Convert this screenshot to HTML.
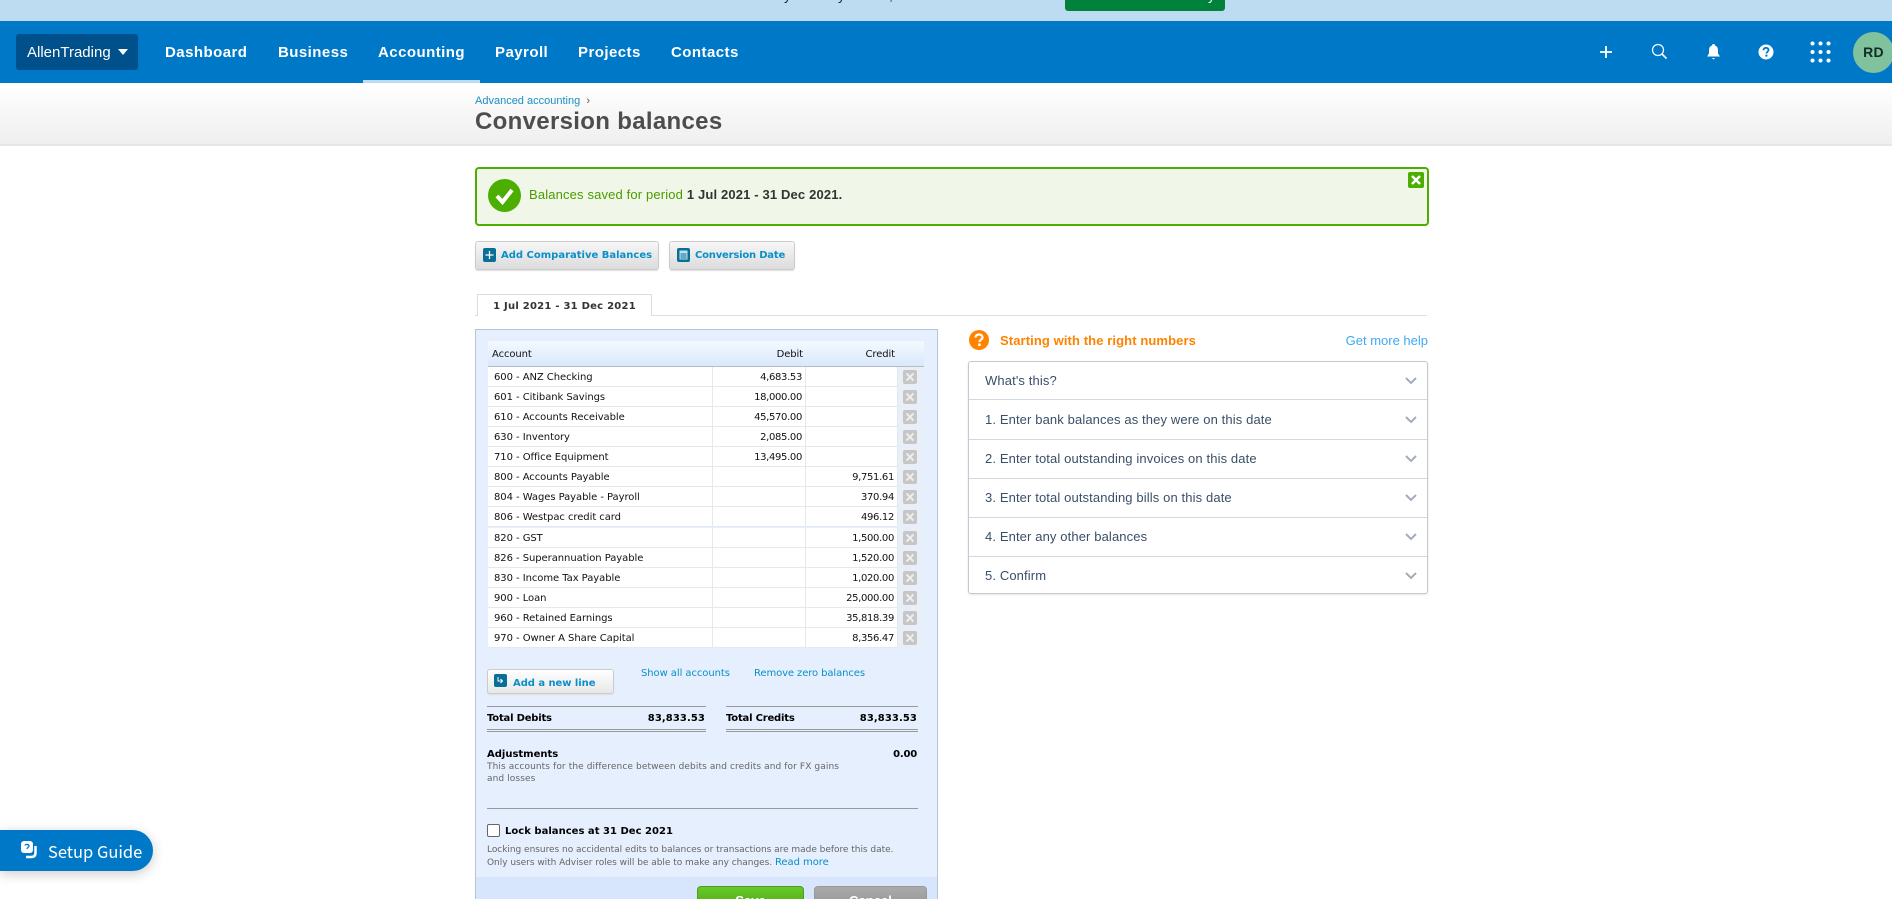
<!DOCTYPE html>
<html lang="en"><head><meta charset="utf-8"><title>Conversion balances</title>
<style>
*{box-sizing:border-box}
html,body{margin:0;padding:0;width:1892px;height:899px;overflow:hidden;background:#fff}
body{position:relative;font-family:"Liberation Sans",sans-serif}
.a{position:absolute;white-space:nowrap}
.v{font-family:"DejaVu Sans",sans-serif}
.nav{position:absolute;top:21px;left:0;width:1892px;height:62px;background:#0078c8}
.ni{position:absolute;top:43px;line-height:20px;font-size:15px;font-weight:bold;color:#fff;letter-spacing:.45px;white-space:nowrap}
.btn{position:absolute;border:1px solid #ccc;border-radius:3px;background:linear-gradient(#f7f7f7,#dcdcdc);box-shadow:0 1px 1px #ddd}
.lnk{color:#0a8fc9}
.row{position:absolute;left:488px;width:436px;height:20px;background:#fff;border-bottom:1px solid #e6e8ec;font:10px/20px "DejaVu Sans",sans-serif;color:#111;letter-spacing:-.06px}
.row i{position:absolute;top:0;height:20px;width:1px;background:#e6e8ec}
.row b{font-weight:normal;position:absolute;top:1px;white-space:nowrap}
.row b.n{letter-spacing:-.33px}
.row .x{position:absolute;left:415px;top:3px;width:14px;height:14px;background:#c6c6c6;border-radius:2px}
.row .x::before,.row .x::after{content:"";position:absolute;left:2px;top:6px;width:10px;height:2px;background:#eee;transform:rotate(45deg)}
.row .x::after{transform:rotate(-45deg)}
.row .cl{position:absolute;left:410px;top:0;width:26px;height:20px;background:#e8eff9}
.acc{position:absolute;left:969px;width:458px;height:39px;border-bottom:1px solid #d3d8e0;font-size:13px;line-height:38px;color:#3a4f68;padding-left:16px;letter-spacing:.12px;white-space:nowrap}
.acc svg{position:absolute;left:436px;top:15px}
</style></head><body>
<div class="a" style="left:0;top:0;width:1892px;height:21px;background:#bddcf1"></div>
<div class="a" style="left:784px;top:-13px;font-size:14px;line-height:16px;color:#222">y</div>
<div class="a" style="left:838px;top:-13px;font-size:14px;line-height:16px;color:#222">y</div>
<div class="a" style="left:889px;top:-13px;font-size:14px;line-height:16px;color:#222">,</div>
<div class="a" style="left:1065px;top:0;width:160px;height:11px;background:#00823d;border-radius:0 0 3px 3px"></div>
<div class="a" style="left:1208px;top:-13px;font-size:14px;line-height:16px;color:#fff">y</div>
<div class="nav"></div>
<div class="a" style="left:16px;top:34px;width:122px;height:36px;background:#00508c;border-radius:3px"></div>
<div class="a" style="left:27px;top:43px;font-size:15px;line-height:20px;color:#fff">AllenTrading</div>
<svg class="a" style="left:118px;top:49px" width="10" height="6"><path d="M0 0H10L5 6Z" fill="#fff"/></svg>
<div class="ni" style="left:165px">Dashboard</div>
<div class="ni" style="left:278px">Business</div>
<div class="ni" style="left:378px">Accounting</div>
<div class="ni" style="left:495px">Payroll</div>
<div class="ni" style="left:578px">Projects</div>
<div class="ni" style="left:671px">Contacts</div>
<div class="a" style="left:363px;top:80px;width:117px;height:3px;background:#bddcf1"></div>
<svg class="a" style="left:1598px;top:44px" width="16" height="16"><path d="M8 2V14M2 8H14" stroke="#fff" stroke-width="1.8" fill="none"/></svg>
<svg class="a" style="left:1651px;top:43px" width="17" height="17"><circle cx="7" cy="7" r="5.5" stroke="#fff" stroke-width="1.2" fill="none"/><path d="M11 11L15.5 15.5" stroke="#fff" stroke-width="1.6"/></svg>
<svg class="a" style="left:1706px;top:43px" width="15" height="18"><path d="M7.5 1C8.5 1 9 1.7 9 2.5C11.5 3.3 12 5.5 12 8V10.5L14 13.5H1L3 10.5V8C3 5.5 3.5 3.3 6 2.5C6 1.700 6.500 1 7.500 1ZM6 15H9L7.500 16.500Z" fill="#fff"/></svg>
<svg class="a" style="left:1758px;top:44px" width="16" height="16"><circle cx="8" cy="8" r="7.500" fill="#fff"/><path d="M5.500 6.200C5.500 4.600 6.700 3.800 8 3.800C9.500 3.800 10.500 4.700 10.500 6C10.500 7.700 8.500 7.800 8.500 9.500" stroke="#0078c8" stroke-width="1.800" fill="none"/><rect x="7.400" y="10.600" width="2" height="2" fill="#0078c8"/></svg>
<svg class="a" style="left:1810px;top:41px" width="22" height="22" fill="#fff"><circle cx="2.500" cy="2.500" r="2"/><circle cx="10.500" cy="2.500" r="2"/><circle cx="18.500" cy="2.500" r="2"/><circle cx="2.500" cy="11" r="2"/><circle cx="10.500" cy="11" r="2"/><circle cx="18.500" cy="11" r="2"/><circle cx="2.500" cy="19.500" r="2"/><circle cx="10.500" cy="19.500" r="2"/><circle cx="18.500" cy="19.500" r="2"/></svg>
<div class="a" style="left:1853px;top:32px;width:41px;height:41px;border-radius:50%;background:#80c19e;color:#0f2f20;font-size:14px;font-weight:bold;text-align:center;line-height:41px;letter-spacing:.3px">RD</div>

<div class="a" style="left:0;top:83px;width:1892px;height:63px;background:linear-gradient(#fff,#efefef);border-bottom:2px solid #e6e6e6"></div>
<div class="a" style="left:475px;top:94px;font-size:11px;line-height:14px;color:#1a8fc4">Advanced accounting &nbsp;<span style="color:#555">›</span></div>
<div class="a" style="left:475px;top:108px;font-size:24px;line-height:28px;font-weight:bold;color:#4d4d4d;letter-spacing:.32px">Conversion balances</div>

<div class="a" style="left:475px;top:167px;width:954px;height:59px;background:#f0f7e8;border:2px solid #4cae00;border-radius:4px"></div>
<svg class="a" style="left:488px;top:179px" width="33" height="33"><circle cx="16.500" cy="16.500" r="16.500" fill="#4cae00"/><path d="M9 17L14.500 23L24 11" stroke="#fff" stroke-width="4" fill="none"/></svg>
<div class="a" style="left:529px;top:187px;font-size:13px;line-height:16px;color:#4c9a00;letter-spacing:.15px">Balances saved for period <b style="color:#333">1 Jul 2021 - 31 Dec 2021.</b></div>
<svg class="a" style="left:1408px;top:172px" width="16" height="16"><rect width="16" height="16" rx="2" fill="#4cae00"/><path d="M4 4L12 12M12 4L4 12" stroke="#fff" stroke-width="2.500"/></svg>

<div class="btn" style="left:475px;top:241px;width:184px;height:29px"></div>
<svg class="a" style="left:483px;top:248px" width="13" height="14"><rect width="13" height="14" rx="2" fill="#0a6f96"/><path d="M6.500 3V11M2.500 7H10.500" stroke="#fff" stroke-width="1.300"/></svg>
<div class="a v lnk" style="left:501px;top:249px;font-size:10px;line-height:14px;font-weight:bold;letter-spacing:0">Add Comparative Balances</div>
<div class="btn" style="left:669px;top:241px;width:126px;height:29px"></div>
<svg class="a" style="left:677px;top:248px" width="13" height="14"><rect width="13" height="14" rx="2" fill="#0a6f96"/><rect x="2.500" y="2.500" width="8" height="9" fill="#bfe0ee"/><path d="M3.500 6H9.500M3.500 8H9.500M3.500 10H9.500" stroke="#0a6f96"/></svg>
<div class="a v lnk" style="left:695px;top:249px;font-size:10px;line-height:14px;font-weight:bold;letter-spacing:-.2px">Conversion Date</div>

<div class="a" style="left:475px;top:315px;width:952px;height:1px;background:#ddd"></div>
<div class="a v" style="left:477px;top:294px;width:175px;height:22px;background:#fff;border:1px solid #ddd;border-bottom:0;text-align:center;font-size:10px;line-height:23px;font-weight:bold;color:#333;letter-spacing:.25px">1 Jul 2021 - 31 Dec 2021</div>

<div class="a" style="left:475px;top:329px;width:463px;height:571px;background:#e5effd;border:1px solid #b8c4d4"></div>
<div class="a" style="left:476px;top:877px;width:461px;height:22px;background:#d7e6fc"></div>
<div class="a v" style="left:488px;top:341px;width:436px;height:26px;background:linear-gradient(#f4f9ff,#d9e8fb);border-bottom:1px solid #b5bcc5;font-size:10px;line-height:27px;color:#111;letter-spacing:-.1px">
<span class="a" style="left:4px">Account</span><span class="a" style="right:121px">Debit</span><span class="a" style="right:29px">Credit</span></div>

<div class="row" style="top:367px"><b style="left:6px">600 - ANZ Checking</b><i style="left:224px"></i><i style="left:317px"></i><i style="left:409px"></i><b class="n" style="right:122px">4,683.53</b><span class="cl"></span><span class="x"></span></div>
<div class="row" style="top:387px"><b style="left:6px">601 - Citibank Savings</b><i style="left:224px"></i><i style="left:317px"></i><i style="left:409px"></i><b class="n" style="right:122px">18,000.00</b><span class="cl"></span><span class="x"></span></div>
<div class="row" style="top:407px"><b style="left:6px">610 - Accounts Receivable</b><i style="left:224px"></i><i style="left:317px"></i><i style="left:409px"></i><b class="n" style="right:122px">45,570.00</b><span class="cl"></span><span class="x"></span></div>
<div class="row" style="top:427px"><b style="left:6px">630 - Inventory</b><i style="left:224px"></i><i style="left:317px"></i><i style="left:409px"></i><b class="n" style="right:122px">2,085.00</b><span class="cl"></span><span class="x"></span></div>
<div class="row" style="top:447px"><b style="left:6px">710 - Office Equipment</b><i style="left:224px"></i><i style="left:317px"></i><i style="left:409px"></i><b class="n" style="right:122px">13,495.00</b><span class="cl"></span><span class="x"></span></div>
<div class="row" style="top:467px"><b style="left:6px">800 - Accounts Payable</b><i style="left:224px"></i><i style="left:317px"></i><i style="left:409px"></i><b class="n" style="right:30px">9,751.61</b><span class="cl"></span><span class="x"></span></div>
<div class="row" style="top:487px"><b style="left:6px">804 - Wages Payable - Payroll</b><i style="left:224px"></i><i style="left:317px"></i><i style="left:409px"></i><b class="n" style="right:30px">370.94</b><span class="cl"></span><span class="x"></span></div>
<div class="row" style="top:507px"><b style="left:6px">806 - Westpac credit card</b><i style="left:224px"></i><i style="left:317px"></i><i style="left:409px"></i><b class="n" style="right:30px">496.12</b><span class="cl"></span><span class="x"></span></div>
<div class="row" style="top:528px"><b style="left:6px">820 - GST</b><i style="left:224px"></i><i style="left:317px"></i><i style="left:409px"></i><b class="n" style="right:30px">1,500.00</b><span class="cl"></span><span class="x"></span></div>
<div class="row" style="top:548px"><b style="left:6px">826 - Superannuation Payable</b><i style="left:224px"></i><i style="left:317px"></i><i style="left:409px"></i><b class="n" style="right:30px">1,520.00</b><span class="cl"></span><span class="x"></span></div>
<div class="row" style="top:568px"><b style="left:6px">830 - Income Tax Payable</b><i style="left:224px"></i><i style="left:317px"></i><i style="left:409px"></i><b class="n" style="right:30px">1,020.00</b><span class="cl"></span><span class="x"></span></div>
<div class="row" style="top:588px"><b style="left:6px">900 - Loan</b><i style="left:224px"></i><i style="left:317px"></i><i style="left:409px"></i><b class="n" style="right:30px">25,000.00</b><span class="cl"></span><span class="x"></span></div>
<div class="row" style="top:608px"><b style="left:6px">960 - Retained Earnings</b><i style="left:224px"></i><i style="left:317px"></i><i style="left:409px"></i><b class="n" style="right:30px">35,818.39</b><span class="cl"></span><span class="x"></span></div>
<div class="row" style="top:628px"><b style="left:6px">970 - Owner A Share Capital</b><i style="left:224px"></i><i style="left:317px"></i><i style="left:409px"></i><b class="n" style="right:30px">8,356.47</b><span class="cl"></span><span class="x"></span></div>

<div class="btn" style="left:487px;top:669px;width:127px;height:25px;background:linear-gradient(#fff,#e8e8e8)"></div>
<svg class="a" style="left:494px;top:674px" width="13" height="13"><rect width="13" height="13" rx="2" fill="#0a6f96"/><path d="M4 3V7H8M6.500 5L8.500 7L6.500 9" stroke="#fff" fill="none"/></svg>
<div class="a v lnk" style="left:513px;top:677px;font-size:10px;line-height:14px;font-weight:bold;letter-spacing:-.05px">Add a new line</div>
<div class="a v lnk" style="left:641px;top:667px;font-size:10px;line-height:14px;letter-spacing:-.07px">Show all accounts</div>
<div class="a v lnk" style="left:754px;top:667px;font-size:10px;line-height:14px;letter-spacing:-.1px">Remove zero balances</div>

<div class="a" style="left:487px;top:706px;width:219px;height:1px;background:#999"></div>
<div class="a" style="left:726px;top:706px;width:192px;height:1px;background:#999"></div>
<div class="a" style="left:487px;top:729px;width:219px;height:3px;border-top:1px solid #999;border-bottom:1px solid #999"></div>
<div class="a" style="left:726px;top:729px;width:192px;height:3px;border-top:1px solid #999;border-bottom:1px solid #999"></div>
<div class="a v" style="left:487px;top:712px;font-size:10px;line-height:14px;font-weight:bold;color:#000;letter-spacing:-.2px">Total Debits</div>
<div class="a v" style="right:1187px;top:712px;font-size:10px;line-height:14px;font-weight:bold;color:#000;letter-spacing:.1px">83,833.53</div>
<div class="a v" style="left:726px;top:712px;font-size:10px;line-height:14px;font-weight:bold;color:#000;letter-spacing:-.2px">Total Credits</div>
<div class="a v" style="right:975px;top:712px;font-size:10px;line-height:14px;font-weight:bold;color:#000;letter-spacing:.1px">83,833.53</div>
<div class="a v" style="left:487px;top:748px;font-size:10px;line-height:14px;font-weight:bold;color:#000;letter-spacing:0">Adjustments</div>
<div class="a v" style="right:975px;top:748px;font-size:10px;line-height:14px;font-weight:bold;color:#000;letter-spacing:-.2px">0.00</div>
<div class="a v" style="left:487px;top:760px;font-size:9px;line-height:14px;color:#666;letter-spacing:.1px">This accounts for the difference between debits and credits and for FX gains</div>
<div class="a v" style="left:487px;top:772px;font-size:9px;line-height:14px;color:#666;letter-spacing:.1px">and losses</div>
<div class="a" style="left:487px;top:808px;width:431px;height:1px;background:#999"></div>
<div class="a" style="left:487px;top:824px;width:13px;height:13px;background:#fff;border:1px solid #666;border-radius:2px"></div>
<div class="a v" style="left:505px;top:825px;font-size:10px;line-height:14px;font-weight:bold;color:#000;letter-spacing:.02px">Lock balances at 31 Dec 2021</div>
<div class="a v" style="left:487px;top:843px;font-size:9px;line-height:14px;color:#666;letter-spacing:-.03px">Locking ensures no accidental edits to balances or transactions are made before this date.</div>
<div class="a v" style="left:487px;top:856px;font-size:9px;line-height:14px;color:#666;letter-spacing:-.03px">Only users with Adviser roles will be able to make any changes. <span class="lnk" style="font-size:10px;letter-spacing:-.05px">Read more</span></div>
<div class="a" style="left:697px;top:886px;width:107px;height:20px;background:linear-gradient(#68c82c,#52ae14);border:1px solid #4c9e16;border-radius:4px;text-align:center;font-size:13px;font-weight:bold;line-height:28px;color:#fff">Save</div>
<div class="a" style="left:814px;top:886px;width:113px;height:20px;background:linear-gradient(#aaa,#999);border:1px solid #999;border-radius:4px;text-align:center;font-size:13px;font-weight:bold;line-height:28px;color:#fff">Cancel</div>

<svg class="a" style="left:969px;top:330px" width="20" height="20"><circle cx="10" cy="10" r="10" fill="#ff8200"/><path d="M6.500 7.500C6.500 5.500 8 4.500 10 4.500C12 4.500 13.500 5.500 13.500 7.500C13.500 9.800 10.500 9.800 10.500 12" stroke="#fff" stroke-width="2.200" fill="none"/><rect x="9.200" y="13.500" width="2.500" height="2.500" fill="#fff"/></svg>
<div class="a" style="left:1000px;top:333px;font-size:13px;line-height:16px;font-weight:bold;color:#ff8200;letter-spacing:.1px">Starting with the right numbers</div>
<div class="a" style="right:464px;top:333px;font-size:13px;line-height:16px;color:#3fa9f5">Get more help</div>
<div class="a" style="left:968px;top:361px;width:460px;height:233px;background:#fff;border:1px solid #c3c9d3;border-radius:3px;box-shadow:0 1px 2px #e5e5e5"></div>
<div class="acc" style="top:362px;height:38px;line-height:37px">What's this?<svg width="12" height="8"><path d="M1 1L6 6L11 1" stroke="#a3adba" stroke-width="2" fill="none"/></svg></div>
<div class="acc" style="top:401px">1. Enter bank balances as they were on this date<svg width="12" height="8"><path d="M1 1L6 6L11 1" stroke="#a3adba" stroke-width="2" fill="none"/></svg></div>
<div class="acc" style="top:440px">2. Enter total outstanding invoices on this date<svg width="12" height="8"><path d="M1 1L6 6L11 1" stroke="#a3adba" stroke-width="2" fill="none"/></svg></div>
<div class="acc" style="top:479px">3. Enter total outstanding bills on this date<svg width="12" height="8"><path d="M1 1L6 6L11 1" stroke="#a3adba" stroke-width="2" fill="none"/></svg></div>
<div class="acc" style="top:518px">4. Enter any other balances<svg width="12" height="8"><path d="M1 1L6 6L11 1" stroke="#a3adba" stroke-width="2" fill="none"/></svg></div>
<div class="acc" style="top:557px;height:36px;border-bottom:0">5. Confirm<svg width="12" height="8"><path d="M1 1L6 6L11 1" stroke="#a3adba" stroke-width="2" fill="none"/></svg></div>

<div class="a" style="left:0;top:830px;width:153px;height:41px;background:#0078c8;border-radius:0 21px 21px 0;box-shadow:0 3px 12px rgba(0,0,0,.2)"></div>
<svg class="a" style="left:21px;top:841px" width="18" height="18"><rect x="0" y="0" width="12" height="12" rx="3" fill="#fff"/><path d="M4 4.500C4 3 8 3 8 5C8 6.500 6 6.300 6 8" stroke="#0078c8" stroke-width="1.300" fill="none"/><path d="M14.500 5V12C14.500 15 12.500 16 10 16H5" stroke="#fff" stroke-width="2.500" fill="none"/></svg>
<div class="a" style="left:48px;top:839px;font-family:'Noto Sans CJK JP','Liberation Sans',sans-serif;font-size:16.5px;line-height:24px;color:#fff">Setup Guide</div>
</body></html>
